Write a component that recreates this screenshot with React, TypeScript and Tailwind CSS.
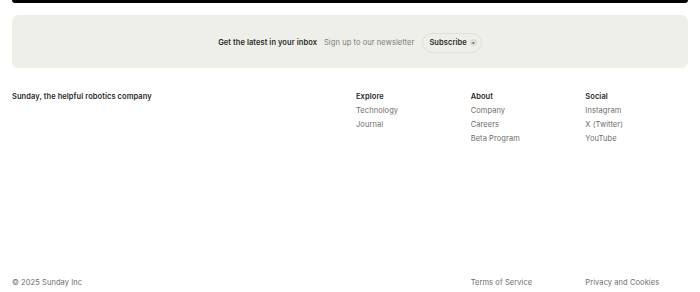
import React from 'react';

const columns = [
  { title: 'Explore', links: ['Technology', 'Journal'] },
  { title: 'About', links: ['Company', 'Careers', 'Beta Program'] },
  { title: 'Social', links: ['Instagram', 'X (Twitter)', 'YouTube'] },
];

export default function App() {
  return (
    <div className="w-[700px] h-[292px] bg-white px-3 flex flex-col text-[7.5px] tracking-[0.01em]" style={{ fontFamily: 'Inter, "Noto Sans", sans-serif' }}>
      <div className="h-[3px] bg-black rounded-b-[4px]" />

      <div className="mt-3 h-[53px] pt-[2px] rounded-[6px] bg-[#efefea] flex items-center justify-center">
        <span className="font-semibold text-[#2a2a2a]">Get the latest in your inbox</span>
        <span className="ml-[7px] text-[#7b7b78]">Sign up to our newsletter</span>
        <button className="ml-[8px] h-[20px] pl-[6px] pr-[4px] rounded-full border border-[#e0e0db] flex items-center gap-[3px] font-semibold text-[#2a2a2a]">
          Subscribe
          <span className="w-[7px] h-[7px] rounded-full bg-[#dcdcd7] flex items-center justify-center">
            <svg width="4" height="4" viewBox="0 0 10 10" fill="none" stroke="#555" strokeWidth="1.8">
              <path d="M2 5h6M5.5 2.5 8 5 5.5 7.5" />
            </svg>
          </span>
        </button>
      </div>

      <div className="mt-[22px] grid grid-cols-6 gap-x-3 leading-[14px]">
        <div className="col-span-3 font-semibold text-[#2a2a2a]">Sunday, the helpful robotics company</div>
        {columns.map(col => (
          <div key={col.title} className="flex flex-col">
            <span className="font-semibold text-[#2a2a2a]">{col.title}</span>
            {col.links.map(l => (
              <span key={l} className="text-[#6e6e6b]">{l}</span>
            ))}
          </div>
        ))}
      </div>

      <div className="mt-auto mb-[2px] grid grid-cols-6 gap-x-3 leading-[14px] text-[#6e6e6b]">
        <span className="col-span-4">© 2025 Sunday Inc</span>
        <span>Terms of Service</span>
        <span>Privacy and Cookies</span>
      </div>
    </div>
  );
}
